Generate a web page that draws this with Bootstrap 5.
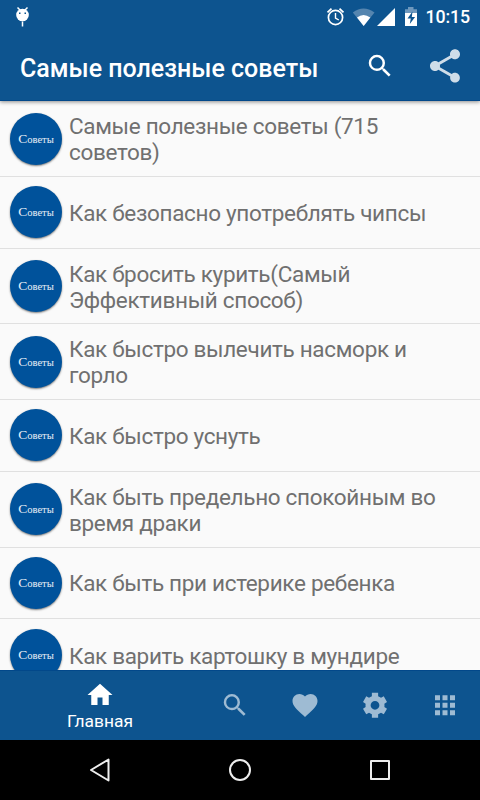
<!DOCTYPE html>
<html lang="ru">
<head>
<meta charset="utf-8">
<meta name="viewport" content="width=device-width, initial-scale=1">
<title>Самые полезные советы</title>
<link href="https://cdn.jsdelivr.net/npm/bootstrap@5.3.0/dist/css/bootstrap.min.css" rel="stylesheet">
<style>
  body { font-family: Roboto, "Liberation Sans", sans-serif; background: #fafafa; }
  svg { display: block; flex: none; }
  .app { width: 480px; height: 800px; }
  .blue { background: #0d548f; color: #fff; }
  .status { height: 33px; padding: 0 10px 0 14px; }
  .clock { font-size: 17.8px; line-height: 32px; font-weight: 500; margin-left: 7px; letter-spacing: -.1px; }
  .toolbar { height: 66px; padding: 0 15px 0 20px; gap: 30px; }
  .toolbar h1 { font-size: 25px; line-height: 30px; font-weight: 500; padding-top: 5px; }
  .top { border-bottom: 1px solid #02488a; box-shadow: 0 1px 4px rgba(0,0,0,.45); height: 101px; z-index: 1; }
  .tips { min-height: 0; padding-top: .4px; }
  .tip { height: 71.7px; padding: 0 20px 0 10px; border: 0; border-bottom: 1px solid #e0e0e0; border-radius: 0; background: #fafafa; color: #707070; flex: none; font-size: 22.5px; line-height: 26px; letter-spacing: -.32px; }
  .tip.two { height: 75.7px; }
  .tip-text { padding-top: 1px; }
  .disc { width: 52px; height: 52px; background: #00529b; color: #e6eef6; box-shadow: 0 1px 2px rgba(0,0,0,.5); font: 10.6px/52px "Liberation Serif", serif; margin: 0 7px 0 0; flex: none; letter-spacing: 0; }
  .disc::first-letter { font-size: 13.5px; }
  .tabs { height: 70px; border-top: 1px solid #02488a; }
  .tabs .side { width: 70px; }
  .tabs .main { width: 200px; font-size: 17.4px; line-height: 22px; padding-top: 9px; }
  .sys { height: 60px; background: #000; padding: 0 85px; }
</style>
<script src="https://cdn.jsdelivr.net/npm/bootstrap@5.3.0/dist/js/bootstrap.bundle.min.js"></script>
</head>
<body class="overflow-hidden">
<div class="app d-flex flex-column overflow-hidden">
  <header class="top blue position-relative flex-shrink-0">
    <div class="status d-flex align-items-center">
      <svg class="me-auto" width="18" height="32" viewBox="0 0 18 32" fill="#fff"><path d="M3.500 6.500l3 3M13.500 6.500l-3 3M8.500 20.500v5" stroke="#fff" stroke-width="1.500"/><circle cx="8.500" cy="14" r="6.300"/><path d="M5 11.500h1.500V13H5zM10.500 11.500H12V13h-1.500z" fill="#0d548f"/></svg>
      <svg width="80" height="32" viewBox="325 0 80 32" fill="none" stroke="#fff">
        <circle cx="335.500" cy="16.500" r="7.100" stroke-width="1.700"/><path d="M335.500 12v5l3.300 2" stroke-width="1.400"/><path d="M327.500 11.300l4-3.600M343.500 11.300l-4-3.600" stroke-width="1.800"/>
        <path d="M352.800 11.500Q363.500 3.500 374.500 11.500L363.700 25z" fill="#5585af" stroke="none"/><path d="M357 16.500Q363.500 11.300 370.300 16.500L363.700 25z" fill="#fff" stroke="none"/>
        <path d="M395 7v18h-18z" fill="#fff" stroke="none"/>
      </svg>
      <svg width="13" height="32" viewBox="405 0 13 32"><path d="M408 6h5.500v2.200h3.500V12H405V8.200h3z" fill="#6e98bd"/><path d="M405 12h12v13h-12z" fill="#fff"/><path d="M412.500 10.500l-5 7h3.300l-1 5.500 5.300-7h-3.300z" fill="#0d548f"/></svg>
      <span class="clock">10:15</span>
    </div>
    <div class="toolbar d-flex align-items-center">
      <h1 class="m-0 me-auto text-nowrap">Самые полезные советы</h1>
      <svg width="30" height="30" viewBox="0 0 24 24" fill="#fff"><path id="lens" d="M15.500 14h-.79l-.28-.27A6.470 6.470 0 0016 9.500 6.500 6.500 0 109.500 16c1.610 0 3.090-.59 4.230-1.570l.27.280v.790l5 4.990L20.490 19l-4.990-5zm-6 0C7.010 14 5 11.990 5 9.500S7.010 5 9.500 5 14 7.010 14 9.500 11.990 14 9.500 14z"/></svg>
      <svg width="40" height="40" viewBox="0 0 24 24" fill="#cfdde9"><path d="M18 16.080c-.76 0-1.440.3-1.960.77L8.910 12.700c.05-.23.090-.46.090-.7s-.04-.47-.09-.7l7.050-4.110c.54.5 1.250.81 2.040.81 1.660 0 3-1.340 3-3s-1.340-3-3-3-3 1.340-3 3c0 .24.040.47.090.7L8.040 9.810C7.500 9.310 6.790 9 6 9c-1.660 0-3 1.340-3 3s1.340 3 3 3c.79 0 1.500-.31 2.040-.81l7.120 4.160c-.05.210-.08.430-.08.650 0 1.610 1.310 2.920 2.920 2.920s2.920-1.310 2.920-2.920-1.310-2.920-2.920-2.920z"/></svg>
    </div>
  </header>

  <main class="tips list-group list-group-flush rounded-0 flex-grow-1 overflow-hidden">
    <div class="tip two list-group-item d-flex align-items-center"><div class="disc rounded-circle text-center">Советы</div><div class="tip-text">Самые полезные советы (715<br>советов)</div></div>
    <div class="tip list-group-item d-flex align-items-center"><div class="disc rounded-circle text-center">Советы</div><div class="tip-text">Как безопасно употреблять чипсы</div></div>
    <div class="tip two list-group-item d-flex align-items-center"><div class="disc rounded-circle text-center">Советы</div><div class="tip-text">Как бросить курить(Самый<br>Эффективный способ)</div></div>
    <div class="tip two list-group-item d-flex align-items-center"><div class="disc rounded-circle text-center">Советы</div><div class="tip-text">Как быстро вылечить насморк и<br>горло</div></div>
    <div class="tip list-group-item d-flex align-items-center"><div class="disc rounded-circle text-center">Советы</div><div class="tip-text">Как быстро уснуть</div></div>
    <div class="tip two list-group-item d-flex align-items-center"><div class="disc rounded-circle text-center">Советы</div><div class="tip-text">Как быть предельно спокойным во<br>время драки</div></div>
    <div class="tip list-group-item d-flex align-items-center"><div class="disc rounded-circle text-center">Советы</div><div class="tip-text">Как быть при истерике ребенка</div></div>
    <div class="tip list-group-item d-flex align-items-center"><div class="disc rounded-circle text-center">Советы</div><div class="tip-text">Как варить картошку в мундире</div></div>
  </main>

  <nav class="tabs blue d-flex flex-shrink-0">
    <div class="main d-flex flex-column align-items-center">
      <svg width="30" height="30" viewBox="0 0 24 24" fill="#fff"><path d="M10 20v-6h4v6h5v-8h3L12 3 2 12h3v8z"/></svg>
      <span>Главная</span>
    </div>
    <div class="side d-flex align-items-center justify-content-center"><svg width="30" height="30" viewBox="0 .6 24 24" fill="#9ebbd3"><use href="#lens"/></svg></div>
    <div class="side d-flex align-items-center justify-content-center"><svg width="30" height="30" viewBox="0 .6 24 24" fill="#9ebbd3"><path d="M12 21.350l-1.450-1.320C5.400 15.360 2 12.280 2 8.500 2 5.420 4.420 3 7.500 3c1.740 0 3.410.81 4.500 2.090C13.090 3.810 14.760 3 16.500 3 19.580 3 22 5.420 22 8.500c0 3.780-3.400 6.860-8.550 11.540z"/></svg></div>
    <div class="side d-flex align-items-center justify-content-center"><svg width="30" height="30" viewBox="0 .6 24 24" fill="#9ebbd3"><path fill-rule="evenodd" d="M9.500 2h5v2.800a8 8 0 012.300 1.200l2.200-1.200 2.600 4.500-2.100 1.400a8 8 0 010 2.600l2.100 1.400-2.600 4.500-2.200-1.200a8 8 0 01-2.300 1.200V22h-5v-2.800A8 8 0 017.200 18L5 19.200l-2.600-4.500 2.100-1.400a8 8 0 010-2.600L2.400 9.300 5 4.800 7.200 6a8 8 0 012.300-1.200zM12 8.500a3.500 3.500 0 100 7 3.500 3.500 0 000-7z"/></svg></div>
    <div class="side d-flex align-items-center justify-content-center"><svg width="30" height="30" viewBox="0 .6 24 24" fill="#9ebbd3"><path d="M4 8h4V4H4v4zm6 12h4v-4h-4v4zm-6 0h4v-4H4v4zm0-6h4v-4H4v4zm6 0h4v-4h-4v4zm6-10v4h4V4h-4zm-6 4h4V4h-4v4zm6 6h4v-4h-4v4zm0 6h4v-4h-4v4z"/></svg></div>
  </nav>

  <div class="sys d-flex align-items-center justify-content-between flex-shrink-0">
    <svg width="30" height="30" viewBox="0 0 30 30" fill="none" stroke="#eee" stroke-width="2" stroke-linejoin="round"><path d="M23.500 4.500v21L6 15z"/></svg>
    <svg width="30" height="30" viewBox="0 0 30 30" fill="none" stroke="#eee" stroke-width="2"><circle cx="15" cy="15" r="10"/></svg>
    <svg width="30" height="30" viewBox="0 0 30 30" fill="none" stroke="#eee" stroke-width="2" stroke-linejoin="round"><path d="M6 6h18v18H6z"/></svg>
  </div>
</div>
</body>
</html>
